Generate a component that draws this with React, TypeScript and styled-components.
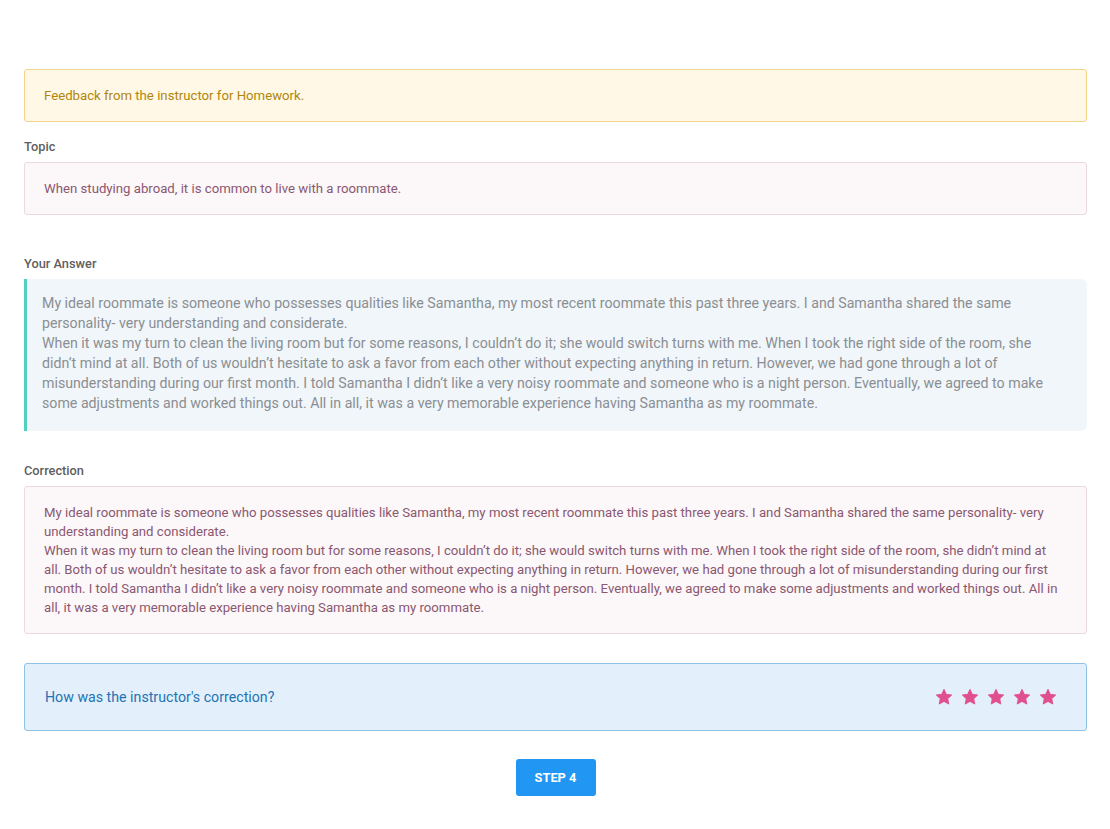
import React from 'react';
import styled, { createGlobalStyle } from 'styled-components';

const GlobalStyle = createGlobalStyle`
    body {
        margin: 0;
        background: #ffffff;
        font-family: Roboto, "Liberation Sans", Arial, sans-serif;
    }
    * {
        box-sizing: border-box;
    }
`;

const Page = styled.div`
    padding: 69px 23px 30px 24px;
    display: flex;
    flex-direction: column;
`;

const Alert = styled.div`
    background: #fff8e6;
    border: 1px solid #f3d58a;
    border-radius: 3px;
    padding: 16px 20px 16px 19px;
    font-size: 13.2px;
    line-height: 19px;
    color: #b2860b;
`;

const Section = styled.div<{ $top: number }>`
    margin-top: ${p => p.$top}px;
    display: flex;
    flex-direction: column;
`;

const Label = styled.div`
    font-size: 12.8px;
    font-weight: 500;
    color: #5f5f5f;
    line-height: 14px;
    margin-bottom: 8px;
`;

const PinkBox = styled.div`
    background: #fcf7f9;
    border: 1px solid #ead9e1;
    border-radius: 3px;
    padding: 16px 20px 16px 19px;
    font-size: 13.2px;
    line-height: 19px;
    color: #8a5870;
`;

const AnswerBox = styled.div`
    background: #f0f6fa;
    border-left: 3px solid #4fd0c0;
    border-radius: 0 6px 6px 0;
    padding: 14px 20px 18px 15px;
    font-size: 14.2px;
    line-height: 20px;
    color: #8b8e92;
`;

const RatingBox = styled.div`
    margin-top: 29px;
    background: #e3f0fb;
    border: 1px solid #8fc1e6;
    border-radius: 3px;
    height: 68px;
    padding: 0 29px 0 20px;
    display: flex;
    align-items: center;
    justify-content: space-between;
`;

const Question = styled.span`
    font-size: 14.2px;
    color: #2273b5;
`;

const Stars = styled.div`
    display: flex;
    gap: 8px;
`;

const Footer = styled.div`
    display: flex;
    justify-content: center;
    margin-top: 28px;
`;

const StepButton = styled.button`
    width: 80px;
    height: 37px;
    border: none;
    border-radius: 3px;
    background: #2196f3;
    color: #ffffff;
    font-family: Roboto, "Liberation Sans", Arial, sans-serif;
    font-size: 12.8px;
    font-weight: 700;
    cursor: pointer;
`;

const Star: React.FC = () => (
    <svg width="18" height="18" viewBox="0 0 24 24">
        <path
            d="M12 1.8l3.1 6.6 7.2.9-5.3 5 1.4 7.1L12 17.9l-6.4 3.5 1.4-7.1-5.3-5 7.2-.9z"
            fill="#e0508f"
            stroke="#e0508f"
            strokeWidth="1.2"
            strokeLinejoin="round"
        />
    </svg>
);

const answer = [
    'My ideal roommate is someone who possesses qualities like Samantha, my most recent roommate this past three years. I and Samantha shared the same personality- very understanding and considerate.',
    'When it was my turn to clean the living room but for some reasons, I couldn’t do it; she would switch turns with me. When I took the right side of the room, she didn’t mind at all. Both of us wouldn’t hesitate to ask a favor from each other without expecting anything in return. However, we had gone through a lot of misunderstanding during our first month. I told Samantha I didn’t like a very noisy roommate and someone who is a night person. Eventually, we agreed to make some adjustments and worked things out. All in all, it was a very memorable experience having Samantha as my roommate.',
];

const App: React.FC = () => {
    return (
        <>
            <GlobalStyle/>
            <Page>
                <Alert>Feedback from the instructor for Homework.</Alert>
                <Section $top={18}>
                    <Label>Topic</Label>
                    <PinkBox>When studying abroad, it is common to live with a roommate.</PinkBox>
                </Section>
                <Section $top={42}>
                    <Label>Your Answer</Label>
                    <AnswerBox>
                        {answer.map((line, i) => <div key={i}>{line}</div>)}
                    </AnswerBox>
                </Section>
                <Section $top={33}>
                    <Label>Correction</Label>
                    <PinkBox>
                        {answer.map((line, i) => <div key={i}>{line}</div>)}
                    </PinkBox>
                </Section>
                <RatingBox>
                    <Question>How was the instructor's correction?</Question>
                    <Stars>
                        {[0, 1, 2, 3, 4].map(i => <Star key={i}/>)}
                    </Stars>
                </RatingBox>
                <Footer>
                    <StepButton>STEP 4</StepButton>
                </Footer>
            </Page>
        </>
    );
};

export default App;
